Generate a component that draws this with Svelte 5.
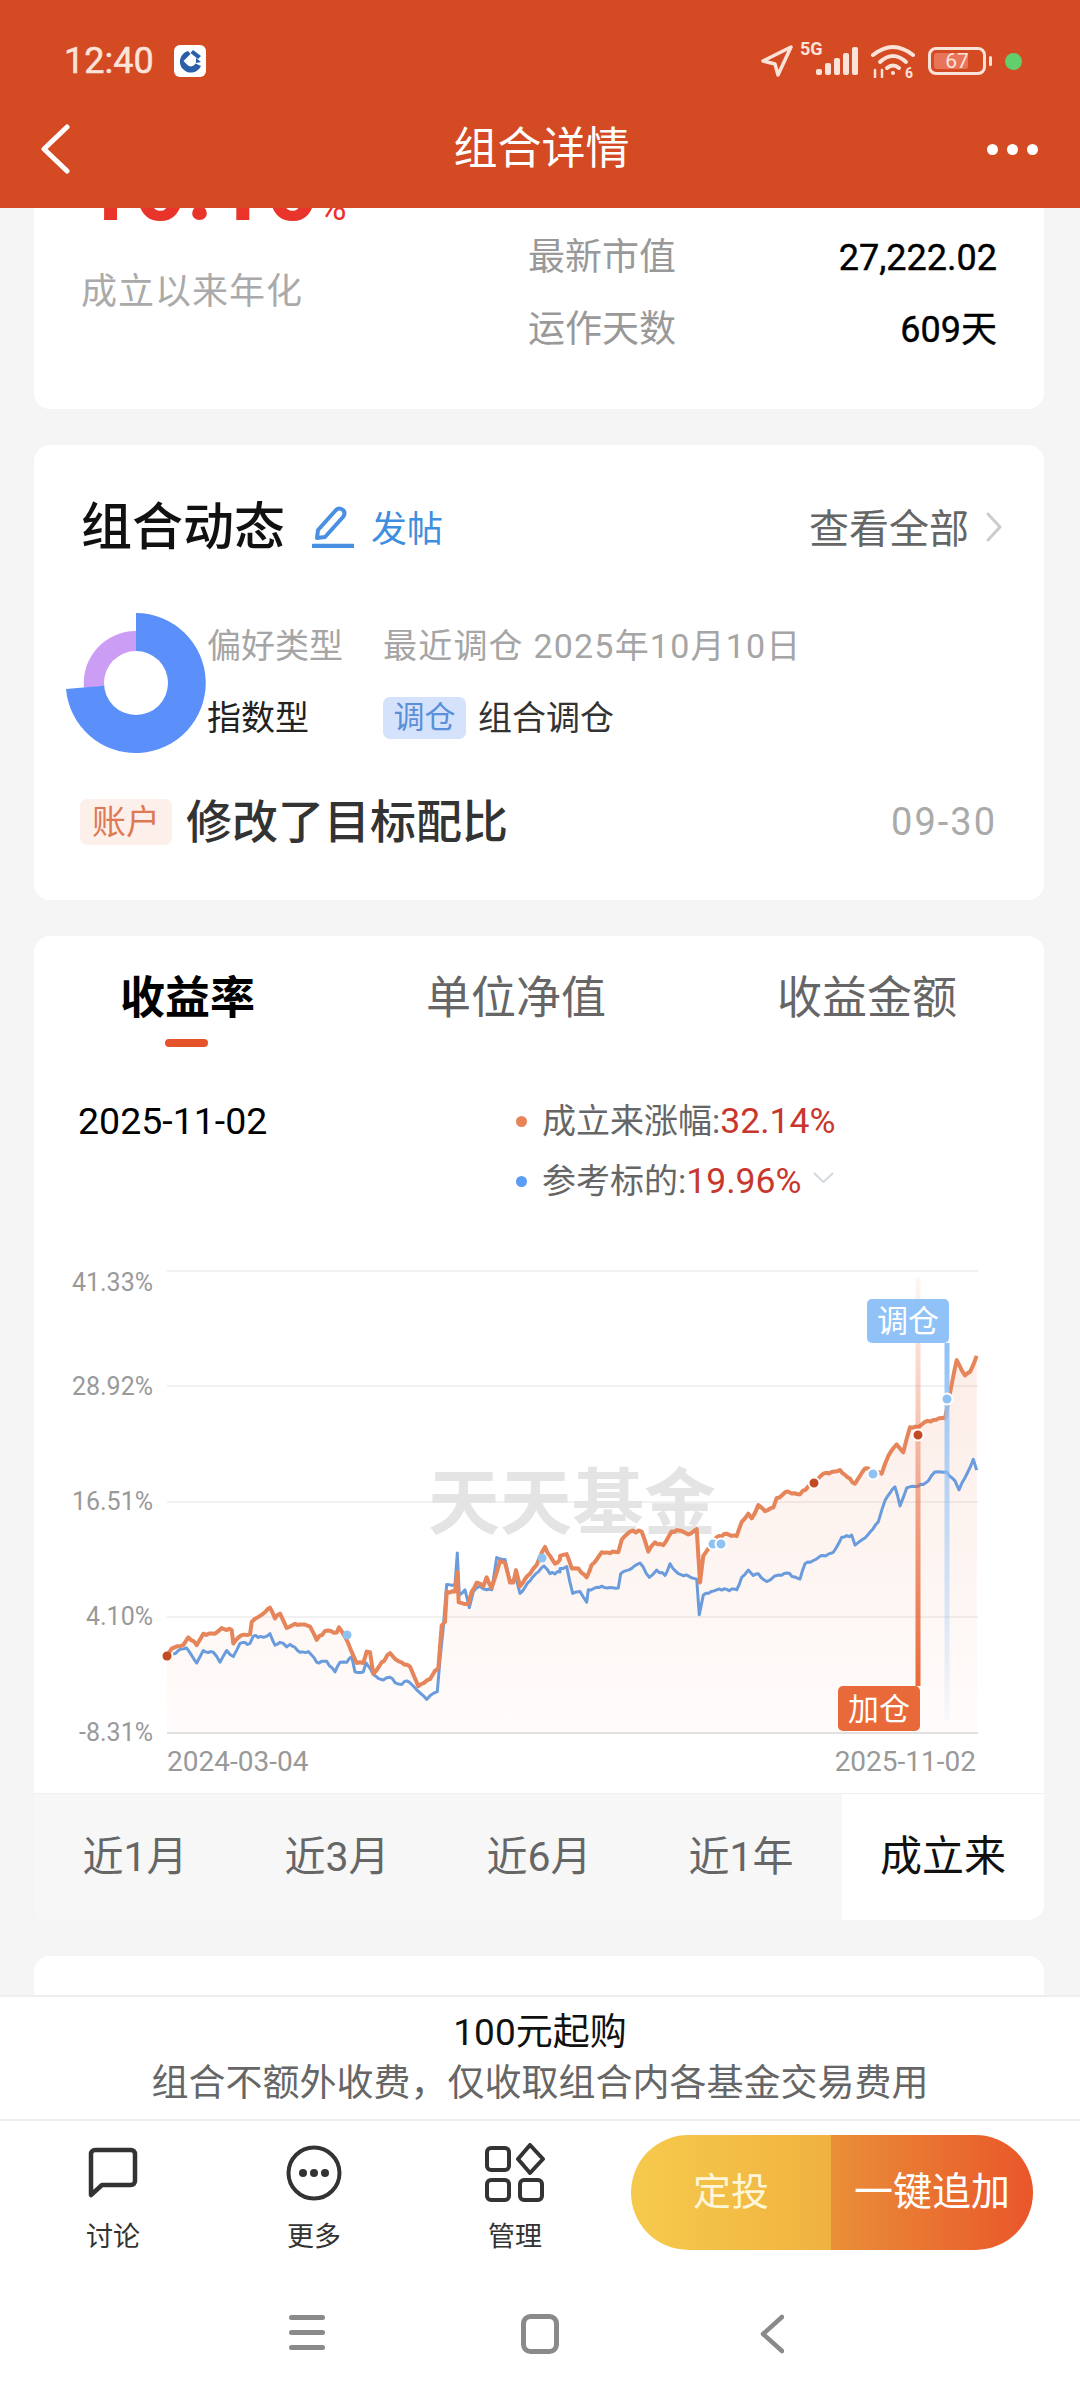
<script lang="ts">
  type Pt = [number, number];

  // traced from the reference, in page pixels once converted
  const left = (x: number, y: number): Pt => [40 + x / 3, 1240 + y / 2.8];
  const right = (x: number, y: number): Pt => [560 + x / 3, 1240 + y / 2.8];

  const orangeA: Pt[] = [[380,1170],[395,1150],[430,1140],[445,1118],[470,1140],[490,1108],[525,1108],[545,1092],[575,1098],[580,1135],[605,1112],[630,1110],[635,1075],[660,1058],[690,1035],[705,1065],[720,1052],[740,1092],[765,1080],[810,1088],[830,1125],[855,1100],[890,1105],[897,1090],[925,1135],[950,1190],[970,1190],[980,1158],[990,1160],[1000,1220],[1050,1162],[1075,1185],[1095,1195],[1110,1200],[1135,1255],[1170,1235],[1185,1212],[1195,1205],[1205,1085],[1215,1075],[1220,990],[1245,990],[1252,935],[1256,1020],[1275,1025],[1285,1025],[1295,990],[1310,965],[1330,975],[1340,950],[1355,980],[1380,905],[1395,910],[1410,965],[1420,965],[1428,930],[1440,975],[1470,940],[1490,915],[1515,865],[1530,890],[1545,912],[1560,900]];
  const orangeB: Pt[] = [[0,890],[20,885],[35,925],[55,925],[80,950],[95,915],[125,880],[175,880],[185,845],[210,822],[245,822],[265,878],[285,852],[310,860],[335,822],[365,820],[385,830],[410,815],[420,965],[430,890],[445,870],[470,838],[500,828],[530,835],[545,795],[565,772],[575,785],[595,748],[615,765],[640,755],[650,728],[685,710],[720,718],[745,695],[790,660],[840,650],[885,688],[915,645],[965,660],[985,610],[1010,578],[1030,600],[1050,530],[1075,530],[1095,515],[1120,510],[1155,505],[1175,410],[1190,342],[1215,385],[1230,375],[1250,330]];
  const blueA: Pt[] = [[400,1165],[415,1155],[440,1148],[470,1190],[490,1155],[520,1160],[540,1188],[560,1155],[580,1172],[600,1135],[630,1135],[640,1115],[670,1118],[690,1108],[705,1140],[720,1132],[740,1145],[750,1138],[780,1160],[805,1158],[830,1188],[860,1185],[885,1215],[900,1188],[920,1188],[935,1172],[945,1215],[970,1215],[978,1190],[1000,1222],[1030,1238],[1050,1230],[1065,1245],[1085,1250],[1100,1240],[1130,1265],[1160,1292],[1180,1275],[1192,1270],[1200,1180],[1210,1090],[1220,970],[1245,970],[1252,882],[1258,1000],[1275,985],[1288,1035],[1300,990],[1320,975],[1340,985],[1355,985],[1370,895],[1395,900],[1410,960],[1430,960],[1440,995],[1470,960],[1495,935],[1512,918],[1530,940],[1560,935]];
  const blueB: Pt[] = [[0,925],[20,920],[38,995],[60,990],[80,1020],[85,985],[125,975],[175,980],[182,940],[215,925],[240,910],[268,950],[290,930],[315,945],[330,912],[355,940],[410,955],[418,1055],[430,1000],[470,985],[530,985],[545,950],[565,930],[580,945],[595,940],[620,962],[650,945],[680,938],[720,955],[735,912],[775,895],[820,880],[845,838],[875,832],[885,860],[915,840],[955,795],[975,735],[1005,697],[1020,750],[1040,700],[1075,695],[1105,680],[1125,655],[1160,655],[1185,680],[1197,705],[1240,620],[1250,650]];

  // adds the small day-to-day steps between the traced points
  function wiggle(pts: Pt[]) {
    const out: Pt[] = [];
    let seed = 7;
    for (let i = 0; i < pts.length - 1; i++) {
      const [x0, y0] = pts[i];
      const [x1, y1] = pts[i + 1];
      const n = Math.max(1, Math.floor((x1 - x0) / 2.5));
      for (let j = 0; j < n; j++) {
        seed = (seed * 137 + 71) % 1009;
        const noise = j === 0 ? 0 : (seed / 1009 - 0.5) * 2.4;
        out.push([x0 + ((x1 - x0) * j) / n, y0 + ((y1 - y0) * j) / n + noise]);
      }
    }
    out.push(pts[pts.length - 1]);
    return out;
  }

  const line = (pts: Pt[]) => pts.map(([x, y]) => `${x.toFixed(1)},${y.toFixed(1)}`).join(' ');

  const orange = wiggle([
    ...orangeA.map(([x, y]) => left(x, y)),
    ...orangeB.map(([x, y]) => right(x, y))
  ]);
  const blue = wiggle([
    ...blueA.map(([x, y]) => left(x, y)),
    ...blueB.map(([x, y]) => right(x, y))
  ]);
  const area = `167,1735 ${line(orange)} 977,1735`;

  const grid = [
    { y: 1273, label: '41.33%', ty: 1284 },
    { y: 1388, label: '28.92%', ty: 1388 },
    { y: 1504, label: '16.51%', ty: 1503 },
    { y: 1619, label: '4.10%', ty: 1618 },
    { y: 1735, label: '-8.31%', ty: 1734 }
  ];
  const plainDots = [
    { x: 347, y: 1637, c: '#90c2f1' },
    { x: 542, y: 1560, c: '#90c2f1' }
  ];
  const ringDots = [
    { x: 713, y: 1546, c: '#90c2f1' },
    { x: 721, y: 1546, c: '#90c2f1' },
    { x: 814, y: 1485, c: '#c44a22' },
    { x: 873, y: 1476, c: '#90c2f1' },
    { x: 918, y: 1437, c: '#c44a22' },
    { x: 947, y: 1401, c: '#90c2f1' }
  ];
  const ranges = ['近1月', '近3月', '近6月', '近1年', '成立来'];
</script>

<div class="screen">
  <header class="top">
    <div class="status">
      <div class="status-left">
        <span class="time">12:40</span>
        <svg class="bank" width="32" height="32" viewBox="0 0 32 32">
          <rect width="32" height="32" rx="6" fill="#fff" />
          <path d="M14 6 A11 11 0 1 0 27 21 L21.5 18.5 A5 5 0 0 1 13.5 20 L9.5 16 L16.5 9 Z" fill="#2a5ea8" />
          <path d="M19 5 L27 11 L24 14 L16.5 8 Z" fill="#2a5ea8" />
          <path d="M22 13 L27 17 L22 18 Z" fill="#2a5ea8" />
        </svg>
      </div>
      <div class="status-right">
        <svg width="34" height="34" viewBox="0 0 34 34" fill="none" stroke="#fbe3da" stroke-width="3.5" stroke-linejoin="round">
          <path d="M31 3 L3 17 L15 20 L18 31 Z" />
        </svg>
        <div class="signal">
          <span class="five-g">5G</span>
          <svg width="42" height="28" viewBox="0 0 42 28" fill="#fbe3da">
            <rect x="0" y="22" width="6" height="6" rx="2" />
            <rect x="9" y="16" width="6" height="12" rx="2" />
            <rect x="18" y="11" width="6" height="17" rx="2" />
            <rect x="27" y="6" width="6" height="22" rx="2" />
            <rect x="36" y="0" width="6" height="28" rx="2" />
          </svg>
        </div>
        <svg class="wifi" width="46" height="34" viewBox="0 0 46 34" fill="none" stroke="#fbe3da" stroke-width="4" stroke-linecap="round">
          <path d="M3 11 Q23 -5 43 11" />
          <path d="M10 18 Q23 6 36 18" />
          <path d="M17 24 Q23 19 29 24" />
          <circle cx="23" cy="29" r="2" fill="#fbe3da" stroke="none" />
          <text x="35" y="34" class="wifi-six">6</text>
          <path d="M5 26 V33 M12 26 V33" stroke-width="2.5" />
        </svg>
        <div class="battery">
          <span class="battery-fill"></span>
          <span class="battery-num">67</span>
          <span class="battery-cap"></span>
        </div>
        <span class="green-dot"></span>
      </div>
    </div>
    <div class="nav">
      <svg class="nav-back" width="30" height="50" viewBox="0 0 30 50" fill="none" stroke="#fff" stroke-width="5" stroke-linecap="round" stroke-linejoin="round">
        <path d="M27 3 L4 25 L27 47" />
      </svg>
      <span class="nav-title">组合详情</span>
      <div class="nav-more"><i></i><i></i><i></i></div>
    </div>
  </header>

  <main class="scroll">
    <section class="card summary">
      <div class="summary-left">
        <div class="rate">10.10<small>%</small></div>
        <div class="rate-label">成立以来年化</div>
      </div>
      <div class="summary-right">
        <div class="stat"><span>最新市值</span><b>27,222.02</b></div>
        <div class="stat"><span>运作天数</span><b>609天</b></div>
      </div>
    </section>

    <section class="card moves">
      <div class="moves-head">
        <h2>组合动态</h2>
        <svg class="pen" width="42" height="42" viewBox="0 0 42 42" fill="none" stroke="#4a90e2" stroke-width="4" stroke-linejoin="round">
          <path d="M5 32 L6 24 L24 4 Q27 1 31 4 Q34 7 31 11 L13 31 Z" />
          <path d="M1 40 H41" stroke-linecap="round" stroke-width="4.5" />
        </svg>
        <span class="post">发帖</span>
        <span class="all">查看全部</span>
        <svg width="18" height="30" viewBox="0 0 18 30" fill="none" stroke="#ccc" stroke-width="3" stroke-linecap="round" stroke-linejoin="round">
          <path d="M3 2 L15 15 L3 28" />
        </svg>
      </div>

      <div class="pie-row">
        <svg class="pie" width="142" height="143" viewBox="0 0 142 143">
          <path d="M71 71 L71 19 A52 52 0 0 0 19 76 Z" fill="#cb9df5" />
          <path d="M71 71 L71 1 A70 70 0 1 1 1 77 Z" fill="#5b8ff9" />
          <circle cx="71" cy="71" r="32" fill="#fff" />
        </svg>
        <div class="pie-info">
          <span class="muted">偏好类型</span>
          <span class="muted recent">最近调仓 2025年10月10日</span>
          <span class="dark">指数型</span>
          <span class="dark adjust"><em class="tag-blue">调仓</em>组合调仓</span>
        </div>
      </div>

      <div class="log">
        <em class="tag-orange">账户</em>
        <strong>修改了目标配比</strong>
        <span>09-30</span>
      </div>
    </section>

    <section class="card perf">
      <div class="tabs">
        <div class="tab active">收益率</div>
        <div class="tab">单位净值</div>
        <div class="tab">收益金额</div>
      </div>

      <div class="legend">
        <div class="legend-date">2025-11-02</div>
        <div class="legend-list">
          <div class="legend-item"><i class="dot-o"></i>成立来涨幅:<b>32.14%</b></div>
          <div class="legend-item"><i class="dot-b"></i>参考标的:<b>19.96%</b>
            <svg width="21" height="11" viewBox="0 0 21 11" fill="none" stroke="#d4d8e0" stroke-width="2">
              <path d="M1 1 L10.5 10 L20 1" />
            </svg>
          </div>
        </div>
      </div>

      <svg class="chart" width="1010" height="535" viewBox="34 1260 1010 535">
        <defs>
          <linearGradient id="area" gradientUnits="userSpaceOnUse" x1="0" y1="1330" x2="0" y2="1735">
            <stop offset="0" stop-color="#e8693a" stop-opacity="0.13" />
            <stop offset="1" stop-color="#e8693a" stop-opacity="0.02" />
          </linearGradient>
          <linearGradient id="mark-o" gradientUnits="userSpaceOnUse" x1="0" y1="1279" x2="0" y2="1688">
            <stop offset="0" stop-color="#e8693a" stop-opacity="0.05" />
            <stop offset="1" stop-color="#e8693a" stop-opacity="1" />
          </linearGradient>
          <linearGradient id="mark-b" gradientUnits="userSpaceOnUse" x1="0" y1="1345" x2="0" y2="1722">
            <stop offset="0" stop-color="#90c2f7" stop-opacity="1" />
            <stop offset="1" stop-color="#90c2f7" stop-opacity="0.05" />
          </linearGradient>
        </defs>

        {#each grid as g, i}
          <line x1="167" x2="978" y1={g.y} y2={g.y} stroke={i === 4 ? '#e2e2e2' : '#f1f1f1'} stroke-width="2" />
          <text class="axis" x="153" y={g.ty + 9} text-anchor="end">{g.label}</text>
        {/each}

        <text class="mark" x="428" y="1530">天天基金</text>

        <polygon points={area} fill="url(#area)" />
        <polyline points={line(blue)} fill="none" stroke="#6a9bdc" stroke-width="3" stroke-linejoin="round" />
        <polyline points={line(orange)} fill="none" stroke="#e6845a" stroke-width="4" stroke-linejoin="round" />

        <rect x="915.5" y="1279" width="5" height="409" fill="url(#mark-o)" />
        <rect x="944.5" y="1345" width="5" height="377" fill="url(#mark-b)" />

        <circle cx="167" cy="1658" r="4.5" fill="#c44a22" />
        {#each plainDots as d}
          <circle cx={d.x} cy={d.y} r="4.5" fill={d.c} />
        {/each}
        {#each ringDots as d}
          <circle cx={d.x} cy={d.y} r="5.5" fill={d.c} stroke="#fff" stroke-width="2" />
        {/each}

        <rect x="867" y="1301" width="82" height="44" rx="5" fill="#90c2f7" />
        <text class="flag" x="908" y="1334" text-anchor="middle">调仓</text>
        <rect x="838" y="1688" width="82" height="45" rx="5" fill="#e8693a" />
        <text class="flag" x="879" y="1722" text-anchor="middle">加仓</text>

        <text class="axis date" x="167" y="1773">2024-03-04</text>
        <text class="axis date" x="976" y="1773" text-anchor="end">2025-11-02</text>
      </svg>

      <div class="ranges">
        {#each ranges as r, i}
          <div class="range" class:on={i === ranges.length - 1}>{r}</div>
        {/each}
      </div>
    </section>

    <section class="card next"></section>
  </main>

  <div class="fee">
    <div class="fee-a">100元起购</div>
    <div class="fee-b">组合不额外收费，仅收取组合内各基金交易费用</div>
  </div>

  <div class="actions">
    <div class="act act-talk">
      <svg width="50" height="50" viewBox="0 0 50 50" fill="none" stroke="#333" stroke-width="4.5" stroke-linejoin="round">
        <path d="M3 47 V6 a4 4 0 0 1 4-4 H43 a4 4 0 0 1 4 4 V33 a4 4 0 0 1-4 4 H14 Z" />
      </svg>
      <span>讨论</span>
    </div>
    <div class="act act-more">
      <svg width="56" height="56" viewBox="0 0 56 56" fill="none" stroke="#333" stroke-width="4">
        <circle cx="28" cy="28" r="25.5" />
        <circle cx="17" cy="28" r="4" fill="#333" stroke="none" />
        <circle cx="28" cy="28" r="4" fill="#333" stroke="none" />
        <circle cx="39" cy="28" r="4" fill="#333" stroke="none" />
      </svg>
      <span>更多</span>
    </div>
    <div class="act act-manage">
      <svg width="62" height="60" viewBox="0 0 62 60" fill="none" stroke="#333" stroke-width="4" stroke-linejoin="round">
        <rect x="3" y="5" width="22" height="22" rx="4" />
        <path d="M46 2 L59 16 L46 30 L34 16 Z" />
        <rect x="3" y="37" width="22" height="20" rx="4" />
        <rect x="36" y="37" width="22" height="20" rx="4" />
      </svg>
      <span>管理</span>
    </div>
    <div class="buy">
      <div class="buy-a">定投</div>
      <div class="buy-b">一键追加</div>
    </div>
  </div>

  <div class="sysnav">
    <svg width="36" height="36" viewBox="0 0 36 36" fill="#8a8a8a">
      <rect x="0" y="1" width="36" height="5" rx="2.5" />
      <rect x="0" y="16" width="36" height="5" rx="2.5" />
      <rect x="0" y="31" width="36" height="5" rx="2.5" />
    </svg>
    <svg width="38" height="40" viewBox="0 0 38 40" fill="none" stroke="#8a8a8a" stroke-width="5">
      <rect x="2.5" y="2.5" width="33" height="35" rx="7" />
    </svg>
    <svg width="24" height="40" viewBox="0 0 24 40" fill="none" stroke="#8a8a8a" stroke-width="4.5" stroke-linecap="round" stroke-linejoin="round">
      <path d="M22 3 L3 20 L22 37" />
    </svg>
  </div>
</div>

<style>
  :global(body) {
    margin: 0;
    background: #f5f5f5;
  }

  .screen {
    width: 1080px;
    height: 2400px;
    display: flex;
    flex-direction: column;
    overflow: hidden;
    background: #f5f5f5;
    font-family: Roboto, "Noto Sans CJK SC", sans-serif;
    color: #222;
  }

  /* header */
  .top {
    height: 208px;
    flex: none;
    background: #d44a22;
    color: #fff;
    position: relative;
    z-index: 2;
  }

  .status {
    height: 122px;
    padding: 44px 58px 0 64px;
    box-sizing: border-box;
    display: flex;
    justify-content: space-between;
    align-items: flex-start;
  }

  .status-left {
    display: flex;
    align-items: center;
    gap: 20px;
  }

  .time {
    font-size: 36px;
    line-height: 34px;
    color: #fbe3da;
    -webkit-text-stroke: 0.5px #fbe3da;
  }

  .bank {
    display: block;
  }

  .status-right {
    display: flex;
    align-items: center;
    height: 34px;
  }

  .signal {
    position: relative;
    width: 42px;
    height: 28px;
    margin: 0 12px 0 22px;
  }

  .five-g {
    position: absolute;
    left: -16px;
    top: -6px;
    font-size: 18px;
    line-height: 16px;
    font-weight: 700;
    color: #fbe3da;
  }

  .wifi-six {
    font-size: 14px;
    font-weight: 700;
    fill: #fbe3da;
    stroke: none;
  }

  .battery {
    position: relative;
    width: 58px;
    height: 28px;
    margin-left: 12px;
    border: 3px solid #fbe3da;
    border-radius: 8px;
    box-sizing: border-box;
  }

  .battery-fill {
    position: absolute;
    left: 3px;
    top: 3px;
    bottom: 3px;
    width: 34px;
    border-radius: 3px;
    background: #e8755a;
  }

  .battery-num {
    position: absolute;
    inset: 0;
    text-align: center;
    font-size: 21px;
    line-height: 22px;
    color: #fbe3da;
  }

  .battery-cap {
    position: absolute;
    right: -9px;
    top: 6px;
    width: 3px;
    height: 10px;
    background: #fbe3da;
    border-radius: 2px;
  }

  .green-dot {
    width: 17px;
    height: 17px;
    margin-left: 19px;
    border-radius: 50%;
    background: #62ce6c;
  }

  .nav {
    height: 54px;
    padding: 0 42px 0 40px;
    display: flex;
    justify-content: space-between;
    align-items: center;
  }

  .nav-title {
    font-size: 44px;
    line-height: 54px;
    margin-left: 26px;
  }

  .nav-more {
    display: flex;
    gap: 9px;
  }

  .nav-more i {
    width: 11px;
    height: 11px;
    border-radius: 50%;
    background: #fff;
  }

  /* scroll area */
  .scroll {
    flex: 1;
    min-height: 0;
    overflow: hidden;
    padding: 0 36px 0 34px;
    display: flex;
    flex-direction: column;
    gap: 36px;
  }

  .card {
    background: #fff;
    border-radius: 16px;
    flex: none;
  }

  .summary {
    height: 261px;
    margin-top: -60px;
    padding: 0 47px;
    display: flex;
    justify-content: space-between;
    box-sizing: border-box;
  }

  .rate {
    margin-top: 1px;
    font-size: 92px;
    line-height: 80px;
    font-weight: 700;
    color: #e8342a;
  }

  .rate small {
    font-size: 38px;
    font-weight: 400;
  }

  .rate-label {
    margin: 20px 0 0;
    font-size: 36px;
    line-height: 50px;
    color: #aaa;
    letter-spacing: 1px;
  }

  .summary-right {
    width: 469px;
    padding-top: 85px;
  }

  .stat {
    display: flex;
    justify-content: space-between;
    font-size: 37px;
    line-height: 50px;
    color: #999;
    margin-bottom: 22px;
  }

  .stat b {
    font-weight: 400;
    color: #000;
    font-size: 36px;
    -webkit-text-stroke: 0.4px #000;
  }

  .moves {
    padding: 52px 47px 52px 46px;
  }

  .moves-head {
    display: flex;
    align-items: center;
    height: 60px;
  }

  .moves-head h2 {
    margin: 2px 0 0 1px;
    font-size: 51px;
    line-height: 60px;
    font-weight: 500;
    color: #111;
  }

  .pen {
    margin-left: 27px;
  }

  .post {
    margin: -2px 0 0 17px;
    font-size: 36px;
    color: #3f8fe0;
  }

  .all {
    margin: -3px 0 0 auto;
    font-size: 40px;
    color: #666;
  }

  .moves-head svg:last-child {
    margin: 0 -6px 0 16px;
  }

  .pie-row {
    margin: 55px 0 0 -15px;
    display: flex;
  }

  .pie {
    flex: none;
  }

  .pie-info {
    padding-top: 12px;
    display: grid;
    grid-template-columns: 176px auto;
    grid-auto-rows: 44px;
    row-gap: 28px;
    font-size: 34px;
    line-height: 44px;
  }

  .muted {
    color: #a5a5a5;
  }

  .recent {
    letter-spacing: 1.2px;
  }

  .dark {
    color: #222;
  }

  .adjust {
    display: flex;
    align-items: center;
    color: #333;
  }

  .tag-blue {
    font-style: normal;
    width: 83px;
    height: 42px;
    margin-right: 12px;
    border-radius: 7px;
    background: #d4e3fb;
    color: #5b8fd9;
    font-size: 31px;
    line-height: 42px;
    text-align: center;
  }

  .log {
    margin-top: 41px;
    display: flex;
    align-items: center;
  }

  .tag-orange {
    font-style: normal;
    width: 92px;
    height: 46px;
    border-radius: 7px;
    background: #fdf0ea;
    color: #dd7a55;
    font-size: 34px;
    line-height: 46px;
    text-align: center;
  }

  .log strong {
    margin-left: 14px;
    font-size: 46px;
    line-height: 52px;
    font-weight: 500;
    color: #333;
  }

  .log span {
    margin-left: auto;
    font-size: 38px;
    color: #aaa;
    letter-spacing: 2px;
  }

  /* chart card */
  .perf {
    padding-top: 38px;
  }

  .tabs {
    display: flex;
    justify-content: space-between;
    padding: 0 87px 0 86px;
  }

  .tab {
    position: relative;
    font-size: 45px;
    line-height: 50px;
    padding-bottom: 23px;
    color: #666;
  }

  .tab.active {
    color: #000;
    font-weight: 700;
  }

  .tab.active::after {
    content: '';
    position: absolute;
    left: 45px;
    bottom: 0;
    width: 43px;
    height: 8px;
    border-radius: 4px;
    background: #e5532b;
  }

  .legend {
    margin-top: 52px;
    padding-left: 44px;
    display: flex;
    height: 103px;
  }

  .legend-date {
    width: 438px;
    font-size: 37.5px;
    line-height: 44px;
    color: #000;
  }

  .legend-item {
    position: relative;
    display: flex;
    align-items: center;
    font-size: 34px;
    line-height: 44px;
    color: #666;
    margin-bottom: 16px;
  }

  .legend-item i {
    width: 11px;
    height: 11px;
    border-radius: 50%;
    margin-right: 15px;
  }

  .dot-o {
    background: #e8845a;
  }

  .dot-b {
    background: #5b9cf5;
  }

  .legend-item b {
    font-size: 35.5px;
    font-weight: 400;
    color: #c8372d;
  }

  .legend-item svg {
    margin: -8px 0 0 12px;
  }

  .chart {
    display: block;
    margin-top: 56px;
  }

  .axis {
    font-family: Roboto, sans-serif;
    font-size: 25px;
    fill: #999;
  }

  .axis.date {
    font-size: 28px;
  }

  .mark {
    font-family: "Noto Sans CJK SC", sans-serif;
    font-size: 72px;
    font-weight: 700;
    fill: #e4e4e4;
  }

  .flag {
    font-size: 31px;
    fill: #fff;
  }

  .ranges {
    display: flex;
    height: 127px;
    background: #f7f7f7;
    border-radius: 0 0 16px 16px;
    overflow: hidden;
    border-top: 1px solid #f0f0f0;
    box-sizing: border-box;
  }

  .range {
    flex: 1;
    font-size: 41px;
    line-height: 126px;
    text-align: center;
    color: #666;
  }

  .range.on {
    background: #fff;
    color: #111;
    font-size: 42px;
  }

  .next {
    height: 200px;
  }

  /* bottom */
  .fee {
    flex: none;
    height: 126px;
    background: #fff;
    border-top: 2px solid #eee;
    border-bottom: 2px solid #eee;
    text-align: center;
    padding-top: 13px;
    box-sizing: border-box;
  }

  .fee-a {
    font-size: 37px;
    line-height: 46px;
    color: #111;
  }

  .fee-b {
    margin-top: 5px;
    font-size: 37px;
    line-height: 46px;
    color: #666;
  }

  .actions {
    flex: none;
    height: 144px;
    background: #fff;
    display: flex;
    padding-top: 14px;
    box-sizing: border-box;
  }

  .act {
    display: flex;
    flex-direction: column;
    align-items: center;
    padding-top: 8px;
    font-size: 27px;
    color: #333;
  }

  .act svg {
    display: block;
    height: 60px;
  }

  .act span {
    margin-top: 16px;
    line-height: 36px;
  }

  .act-talk {
    width: 60px;
    margin-left: 83px;
  }

  .act-more {
    width: 60px;
    margin-left: 141px;
  }

  .act-manage {
    width: 62px;
    margin-left: 140px;
  }

  .buy {
    margin-left: 85px;
    width: 402px;
    height: 115px;
    border-radius: 58px;
    overflow: hidden;
    display: flex;
    color: #fff;
    text-align: center;
  }

  .buy-a {
    width: 200px;
    font-size: 38px;
    line-height: 115px;
    color: #fff6d8;
    background: linear-gradient(90deg, #f6ca4d, #f0b23f);
  }

  .buy-b {
    flex: 1;
    font-size: 39px;
    line-height: 115px;
    background: linear-gradient(90deg, #e98f38, #e9562a);
  }

  .sysnav {
    flex: none;
    height: 135px;
    background: #fff;
    display: flex;
    align-items: flex-start;
    padding: 49px 0 0 289px;
    box-sizing: border-box;
  }

  .sysnav svg:nth-child(2) {
    margin-left: 196px;
  }

  .sysnav svg:nth-child(3) {
    margin-left: 201px;
  }
</style>
